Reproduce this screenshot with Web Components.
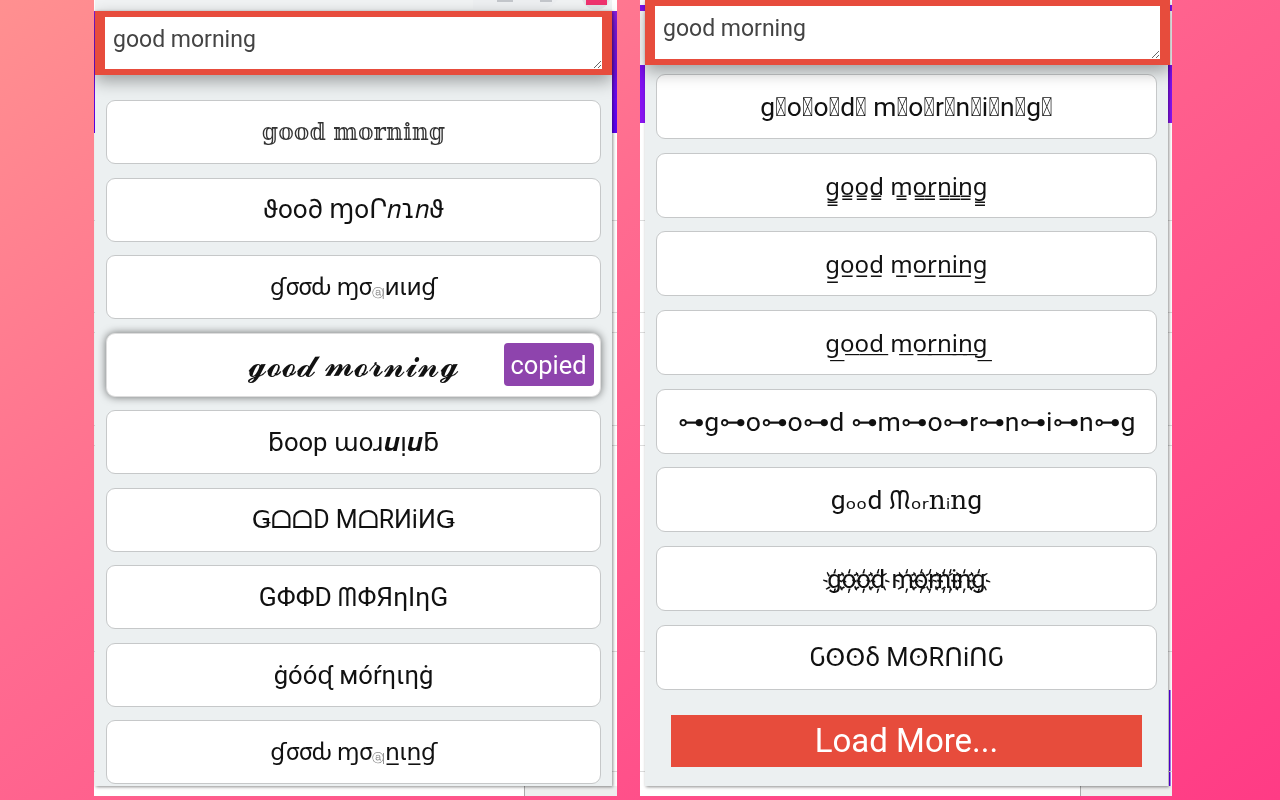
<!DOCTYPE html>
<html lang="en">
<head>
<meta charset="utf-8">
<title>Fancy text</title>
<style>
  html, body { margin: 0; height: 800px; overflow: hidden; }
  body {
    display: flex;
    align-items: flex-start;
    gap: 23px;
    padding-left: 94px;
    box-sizing: border-box;
    font-family: Roboto, "DejaVu Sans", "Noto Sans", sans-serif;
    background: linear-gradient(145deg, #ff9090 0%, #ff6b90 38%, #ff5a8c 60%, #ff3b85 100%);
  }
  .tiny { font-size: 12px; color: #8a8a8a; vertical-align: -2px; letter-spacing: -2px; margin-right: 2px; }
  .serif { font-family: "DejaVu Serif", serif; }
</style>
</head>
<body>
  <shot-window style="--w:523px; --panel-left:1px; --panel-w:517px; --strip-top:11px; --purple:linear-gradient(#8a1ee0,#5a00f0) 0 11px / 100% 122px no-repeat; --line-x:430px">
    <browser-strip slot="top"></browser-strip>
    <text-box style="--h:64px">good morning</text-box>
    <style-list style="--top:25px; --gap:13.5px; --card-h:64px">
      <style-card style="--fs:23.4px; --face:'DejaVu Serif'; --col:#333">𝕘𝕠𝕠𝕕 𝕞𝕠𝕣𝕟𝕚𝕟𝕘</style-card>
      <style-card style="--fs:26px">ϑoo∂ ɱoՐ𝑛ɿ𝑛ϑ</style-card>
      <style-card style="--fs:23.5px; --ls:-.5px">ɠσσԃ ɱσ<span class="tiny">ⓐ|</span>ᴎιᴎɠ</style-card>
      <style-card copied style="--fs:33px">𝓰𝓸𝓸𝓭 𝓶𝓸𝓻𝓷𝓲𝓷𝓰</style-card>
      <style-card style="--fs:25.6px">ƃoop ɯoɹ𝒖ᴉ𝒖ƃ</style-card>
      <style-card style="--fs:25px">ǤᗝᗝD MᗝRИiИǤ</style-card>
      <style-card style="--fs:26.4px">GΦΦD ᗰΦЯηIηG</style-card>
      <style-card style="--fs:25.6px">ġóóᶑ мóŕηιηġ</style-card>
      <style-card style="--fs:23.5px; --ls:-.5px">ɠσσԃ ɱσ<span class="tiny">ⓐ|</span>n̲ιn̲ɠ</style-card>
    </style-list>
  </shot-window>

  <shot-window style="--w:532px; --panel-left:5px; --panel-w:523px; --strip-top:0px; --purple:linear-gradient(#7a10f0,#8a14f0) 0 5px / 100% 6px no-repeat, linear-gradient(#7a10f0,#8a14f0) 0 65px / 100% 58px no-repeat, linear-gradient(#5a00f0,#5a00f0) 529px 690px / 1.5px 96px no-repeat; --line-x:440px">
    <text-box style="--h:65px; --over:2px">good morning</text-box>
    <style-list style="--top:9px; --gap:13.7px; --card-h:65px">
      <style-card>g&#xF0000;o&#xF0000;o&#xF0000;d&#xF0000; m&#xF0000;o&#xF0000;r&#xF0000;n&#xF0000;i&#xF0000;n&#xF0000;g&#xF0000;</style-card>
      <style-card style="--fs:24px; --face:'Noto Sans'">g̳o̳o̳d̳ m̳o̳r̳n̳i̳n̳g̳</style-card>
      <style-card style="--fs:24px; --face:'Noto Sans'">g̲o̲o̲d̲ m̲o̲r̲n̲i̲n̲g̲</style-card>
      <style-card style="--fs:24px; --face:'Noto Sans'">g͟o͟o͟d͟ m͟o͟r͟n͟i͟n͟g͟</style-card>
      <style-card style="--fs:26.6px">⊶g⊶o⊶o⊶d ⊶m⊶o⊶r⊶n⊶i⊶n⊶g</style-card>
      <style-card>gₒₒd ᙏₒᵣ<span class="serif">n</span>ᵢ<span class="serif">n</span>g</style-card>
      <style-card style="--fs:25.5px">g҉o҉o҉d҉ m҉o҉r҉n҉i҉n҉g҉</style-card>
      <style-card style="--fs:25.5px">Ԍʘʘδ MʘRᑎiᑎԌ</style-card>
      <load-more slot="foot">Load More...</load-more>
    </style-list>
  </shot-window>

<script>
// screenshot frame: white page behind the popup, purple edges and the popup panel
class ShotWindow extends HTMLElement {
  constructor() {
    super();
    this.attachShadow({ mode: "open" });
    this.shadowRoot.innerHTML = `
      <style>
        :host {
          display: block;
          width: var(--w);
          height: 796px;
          overflow: hidden;
          filter: blur(.35px);
          background:
            linear-gradient(#aaa,#aaa) var(--line-x) 786px / 1px 10px no-repeat,
            linear-gradient(#eee,#eee) var(--line-x) 786px / 100% 10px no-repeat,
            linear-gradient(#dcdcdc,#dcdcdc) 0 220px / 100% 1px no-repeat,
            linear-gradient(#dcdcdc,#dcdcdc) 0 312px / 100% 1px no-repeat,
            linear-gradient(#dcdcdc,#dcdcdc) 0 332px / 100% 1px no-repeat,
            linear-gradient(#dcdcdc,#dcdcdc) 0 425px / 100% 1px no-repeat,
            linear-gradient(#dcdcdc,#dcdcdc) 0 445px / 100% 1px no-repeat,
            linear-gradient(#dcdcdc,#dcdcdc) 0 651px / 100% 1px no-repeat,
            linear-gradient(#dcdcdc,#dcdcdc) 0 771px / 100% 1px no-repeat,
            var(--purple),
            #fff;
        }
        .panel {
          margin-left: var(--panel-left);
          width: var(--panel-w);
          height: calc(786px - var(--strip-top));
          background: #ecf0f1;
          box-shadow: 1px 1px 3px rgba(0,0,0,.45);
        }
      </style>
      <slot name="top"></slot>
      <div class="panel"><slot></slot></div>`;
  }
}

// the bit of browser toolbar still visible over the popup
class BrowserStrip extends HTMLElement {
  constructor() {
    super();
    this.attachShadow({ mode: "open" });
    this.shadowRoot.innerHTML = `
      <style>
        :host {
          display: flex;
          justify-content: flex-end;
          align-items: flex-end;
          gap: 17px;
          height: 11px;
          margin-left: 1px;
          width: 517px;
          overflow: hidden;
          background: #f1f3f4;
          box-sizing: border-box;
        }
        .pill { width: 90px; height: 40px; border-radius: 0 0 24px 0; background: #eef0f2; flex: none; margin-bottom: 2px; display: flex; gap: 27px; align-items: flex-end; justify-content: flex-start; padding-left: 24px; box-sizing: border-box; }
        .pill i { width: 16px; height: 2px; background: #c4c7cc; margin-bottom: 7px; }
        .pill i + i { width: 12px; }
        .dot { width: 32px; height: 40px; border-radius: 50%; background: #e3e5e8; flex: none; display: flex; align-items: flex-end; justify-content: center; margin-bottom: 1px; }
        .dot b { display: block; width: 21px; height: 9px; margin-bottom: 5px; background: #f0326e; }
      </style>
      <div class="pill"><i></i><i></i></div>
      <div class="dot"><b></b></div>`;
  }
}

// red framed input at the top of the popup
class TextBox extends HTMLElement {
  constructor() {
    super();
    this.attachShadow({ mode: "open" });
    this.shadowRoot.innerHTML = `
      <style>
        :host { display: block; position: relative; z-index: 2; }
        textarea {
          display: block;
          box-sizing: border-box;
          width: calc(100% + var(--over, 0px));
          height: var(--h);
          border: solid #e74c3c;
          border-width: 6px 10px;
          outline: 0;
          margin: 0;
          padding: 8px 8px;
          font: 23px/30px Roboto, sans-serif;
          color: #444;
          background: #fff;
          resize: vertical;
          box-shadow: 0 6px 16px rgba(0,0,0,.35);
        }
      </style>
      <textarea spellcheck="false"></textarea>`;
    this.shadowRoot.querySelector("textarea").value = this.textContent.trim();
  }
  connectedCallback() {
    this.shadowRoot.querySelector("textarea").value = this.textContent.trim();
  }
}

class StyleList extends HTMLElement {
  constructor() {
    super();
    this.attachShadow({ mode: "open" });
    this.shadowRoot.innerHTML = `
      <style>
        :host {
          display: flex;
          flex-direction: column;
          gap: var(--gap);
          padding: var(--top) 11px 0 11px;
        }
        ::slotted(load-more) { margin-top: 11px; }
      </style>
      <slot></slot><slot name="foot"></slot>`;
  }
}

class StyleCard extends HTMLElement {
  constructor() {
    super();
    this.attachShadow({ mode: "open" });
    this.shadowRoot.innerHTML = `
      <style>
        :host {
          display: flex;
          align-items: center;
          justify-content: center;
          position: relative;
          box-sizing: border-box;
          height: var(--card-h);
          background: #fff;
          border: 1.5px solid #c6c8c9;
          border-radius: 9px;
          color: var(--col, #111);
          font-size: var(--fs, 26.4px);
          letter-spacing: var(--ls, 0);
          font-family: var(--face, Roboto), Roboto, "DejaVu Sans", "Noto Sans", sans-serif;
          white-space: nowrap;
        }
        :host([copied]) {
          border-color: #ddd;
          box-shadow: 0 0 8px rgba(0,0,0,.55);
        }
        .wrap { display: block; }
        .badge {
          display: none;
          position: absolute;
          right: 6.5px;
          top: 9.5px;
          width: 90px;
          height: 43px;
          align-items: center;
          justify-content: center;
          border-radius: 4px;
          background: #8e44ad;
          color: #fff;
          font: 25.4px Roboto, sans-serif;
        }
        :host([copied]) .badge { display: flex; }
      </style>
      <span class="wrap"><slot></slot></span>
      <span class="badge">copied</span>`;
  }
}

class LoadMore extends HTMLElement {
  constructor() {
    super();
    this.attachShadow({ mode: "open" });
    this.shadowRoot.innerHTML = `
      <style>
        :host {
          display: flex;
          align-items: center;
          justify-content: center;
          height: 52.5px;
          margin: 0 15px;
          background: #e74c3c;
          color: #fff;
          font: 33px Roboto, sans-serif;
        }
      </style>
      <slot></slot>`;
  }
}

customElements.define("shot-window", ShotWindow);
customElements.define("browser-strip", BrowserStrip);
customElements.define("text-box", TextBox);
customElements.define("style-list", StyleList);
customElements.define("style-card", StyleCard);
customElements.define("load-more", LoadMore);
</script>
</body>
</html>
